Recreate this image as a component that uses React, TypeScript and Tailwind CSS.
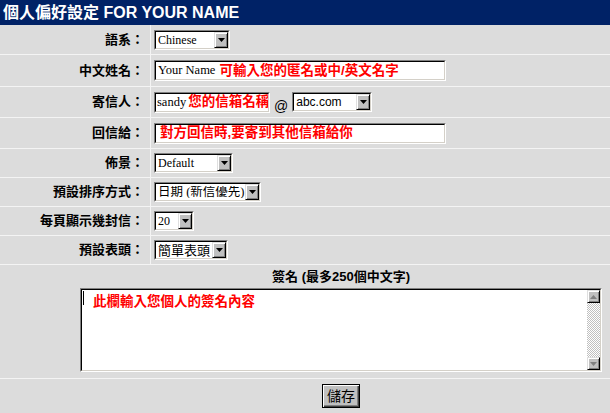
import React from "react";

const SANS = "font-['Liberation_Sans','Noto_Sans_CJK_TC',sans-serif]";
const SERIF = "font-['Liberation_Serif','Noto_Sans_CJK_TC',serif]";

// Windows classic sunken box (inputs, selects, textarea)
function Sunken({ className, children }: { className: string; children?: React.ReactNode }) {
  return (
    <div className={`shrink-0 border border-t-[#808080] border-l-[#808080] border-r-white border-b-white ${className}`}>
      <div className="h-full flex items-center bg-white border border-t-black border-l-black border-r-[#d4d0c8] border-b-[#d4d0c8] overflow-hidden">
        {children}
      </div>
    </div>
  );
}

function ArrowBtn() {
  return (
    <div className="h-full w-[14px] shrink-0 flex items-center justify-center bg-[#c0c0c0] border border-t-[#dfdfdf] border-l-[#dfdfdf] border-r-black border-b-black shadow-[inset_1px_1px_#fff,inset_-1px_-1px_#808080]">
      <svg width="7" height="4" viewBox="0 0 7 4">
        <polygon points="0,0 7,0 3.5,4" fill="#000" />
      </svg>
    </div>
  );
}

function Select({ className, font, children }: { className: string; font: string; children: React.ReactNode }) {
  return (
    <Sunken className={`h-[20px] ${className}`}>
      <div className={`flex-1 pl-[2px] text-[12px] leading-none whitespace-nowrap overflow-hidden text-black ${font}`}>
        {children}
      </div>
      <ArrowBtn />
    </Sunken>
  );
}

function Hint({ children, className = "" }: { children: React.ReactNode; className?: string }) {
  return (
    <span className={`text-[13.5px] font-bold text-[#ff0000] whitespace-nowrap leading-none ${SANS} ${className}`}>
      {children}
    </span>
  );
}

function Label({ h, children }: { h: string; children: React.ReactNode }) {
  return (
    <div className={`${h} bg-[#dcdcdc] flex items-center justify-end pr-[6px] text-[13px] font-bold text-black whitespace-nowrap`}>
      {children}
    </div>
  );
}

function Cell({ h, children }: { h: string; children: React.ReactNode }) {
  return <div className={`${h} bg-[#dcdcdc] flex items-center pl-[3px]`}>{children}</div>;
}

function ScrollBtn({ up }: { up?: boolean }) {
  return (
    <div className="h-[13px] w-[13px] flex items-center justify-center bg-[#c0c0c0] border border-t-[#dfdfdf] border-l-[#dfdfdf] border-r-black border-b-black shadow-[inset_1px_1px_#fff,inset_-1px_-1px_#808080]">
      <svg width="7" height="4" viewBox="0 0 7 4">
        {up ? <polygon points="0,4 7,4 3.5,0" fill="#808080" /> : <polygon points="0,0 7,0 3.5,4" fill="#808080" />}
      </svg>
    </div>
  );
}

export default function App() {
  return (
    <div className={`w-[610px] h-[413px] overflow-hidden bg-[#dcdcdc] ${SANS}`}>
      {/* title bar */}
      <div className="h-[25px] bg-[#002266] text-white font-bold text-[16px] pl-[3px] flex items-center whitespace-nowrap">
        個人偏好設定 FOR YOUR NAME
      </div>

      <div className="grid grid-cols-[150px_1fr] gap-px bg-[#f4f4f4]">
        <Label h="h-[29px]">語系：</Label>
        <Cell h="h-[29px]">
          <Select className="w-[76px]" font={SERIF}>Chinese</Select>
        </Cell>

        <Label h="h-[31px]">中文姓名：</Label>
        <Cell h="h-[31px]">
          <Sunken className="w-[292px] h-[21px]">
            <span className={`pl-[2px] text-[12.5px] leading-none whitespace-nowrap ${SERIF}`}>Your Name</span>
            <Hint className="ml-[4px]">可輸入您的匿名或中/英文名字</Hint>
          </Sunken>
        </Cell>

        <Label h="h-[30px]">寄信人：</Label>
        <Cell h="h-[30px]">
          <Sunken className="w-[116px] h-[21px]">
            <span className={`pl-[1px] text-[12.5px] leading-none whitespace-nowrap ${SERIF}`}>sandy</span>
            <Hint className="ml-[2px]">您的信箱名稱</Hint>
          </Sunken>
          <span className="mt-[7px] mx-[4px] text-[14px] leading-none">@</span>
          <Select className="w-[80px]" font={SANS}>abc.com</Select>
        </Cell>

        <Label h="h-[30px]">回信給：</Label>
        <Cell h="h-[30px]">
          <Sunken className="w-[292px] h-[21px]">
            <Hint className="ml-[4px]">對方回信時,要寄到其他信箱給你</Hint>
          </Sunken>
        </Cell>

        <Label h="h-[28px]">佈景：</Label>
        <Cell h="h-[28px]">
          <Select className="w-[79px]" font={SERIF}>Default</Select>
        </Cell>

        <Label h="h-[28px]">預設排序方式：</Label>
        <Cell h="h-[28px]">
          <Select className="w-[107px]" font={SERIF}>
            <span className="text-[12.5px]">日期 (新信優先)</span>
          </Select>
        </Cell>

        <Label h="h-[28px]">每頁顯示幾封信：</Label>
        <Cell h="h-[28px]">
          <Select className="w-[40px]" font={SERIF}>20</Select>
        </Cell>

        <Label h="h-[28px]">預設表頭：</Label>
        <Cell h="h-[28px]">
          <Select className="w-[74px]" font={SERIF}>
            <span className="text-[13px]">簡單表頭</span>
          </Select>
        </Cell>

        {/* signature */}
        <div className="col-span-2 h-[113px] bg-[#dcdcdc] pt-[4px]">
          <div className="ml-[80px] w-[522px] flex flex-col">
            <div className="text-center text-[13px] font-bold leading-[16px] whitespace-nowrap">簽名 (最多250個中文字)</div>
            <Sunken className="mt-[3px] h-[84px] w-full">
              <div className="self-stretch flex-1 flex items-start">
                <span className="mt-[1px] ml-[1px] w-px h-[14px] bg-black" />
                <Hint className="ml-[9px] mt-[5px]">此欄輸入您個人的簽名內容</Hint>
              </div>
              <div className="self-stretch w-[13px] flex flex-col justify-between bg-[image:repeating-conic-gradient(#c0c0c0_0_25%,#fff_0_50%)] bg-[length:2px_2px]">
                <ScrollBtn up />
                <ScrollBtn />
              </div>
            </Sunken>
          </div>
        </div>

        {/* save */}
        <div className="col-span-2 h-[34px] bg-[#dcdcdc] pt-[5px]">
          <div className="ml-[80px] w-[522px] flex justify-center">
            <button className="w-[38px] h-[24px] border border-black bg-[#c0c0c0] shadow-[inset_1px_1px_#fff,inset_-1px_-1px_#404040,inset_-2px_-2px_#808080] text-[14px] leading-none text-black">
              儲存
            </button>
          </div>
        </div>
      </div>
    </div>
  );
}
